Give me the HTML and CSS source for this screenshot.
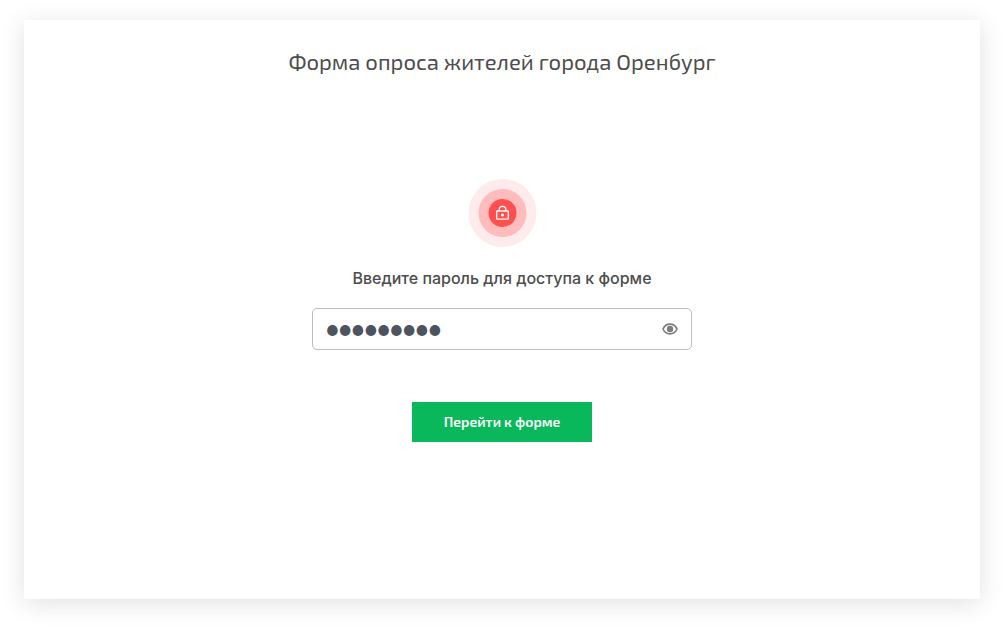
FILE: index.html
```
<!DOCTYPE html>
<html lang="ru">
<head>
    <meta charset="UTF-8">
    <meta name="viewport" content="width=device-width, initial-scale=1.0">
    <title>Форма опроса жителей города Оренбург</title>
    <link rel="stylesheet" href="styles.css">
</head>
<body>

<main class="card">
    <h1 class="title">Форма опроса жителей города Оренбург</h1>

    <form class="access-form">
        <svg class="lock" width="69" height="68" viewBox="-0.5 0 69 68" fill="none" aria-hidden="true">
            <circle cx="34" cy="34" r="34" fill="#ffebeb"/>
            <circle cx="34" cy="34" r="24" fill="#ffbcbc"/>
            <circle cx="34" cy="34" r="14" fill="#ff4f4f"/>
            <rect x="28.2" y="32" width="11.6" height="8.2" rx="0.6" stroke="#fff" stroke-width="1.3"/>
            <path d="M30.7 32v-1.3a3.3 3.3 0 0 1 6.6 0V32" stroke="#fff" stroke-width="1.3"/>
            <circle cx="34" cy="36.1" r="1.5" fill="#fff"/>
        </svg>

        <label class="label" for="password">Введите пароль для доступа к форме</label>

        <div class="field">
            <input class="input" type="text" id="password" value="●●●●●●●●●" autocomplete="off">
            <button class="toggle" type="button" aria-label="Показать пароль">
                <svg width="16" height="12" viewBox="0 0 16 12" fill="none">
                    <path d="M1 6c1.5-3.2 4-4.8 7-4.8s5.5 1.6 7 4.8c-1.5 3.2-4 4.8-7 4.8S2.5 9.2 1 6z" stroke="#7d7d7d" stroke-width="1.7"/>
                    <circle cx="8" cy="6" r="3.2" fill="#7d7d7d"/>
                </svg>
            </button>
        </div>

        <button class="submit" type="submit">Перейти к форме</button>
    </form>
</main>

</body>
</html>
```

FILE: styles.css
```
* {
    box-sizing: border-box;
}

body {
    margin: 0;
    min-height: 100vh;
    padding: 20px 24px 28px;
    display: flex;
    background-color: #fff;
    color: #4d4d4d;
    font-family: Inter, "Liberation Sans", sans-serif;
}

.card {
    flex: 1;
    padding: 27px 24px;
    background-color: #fff;
    box-shadow: 0 4px 24px rgba(0, 0, 0, 0.12);
}

.title {
    margin: 0;
    font-family: "Exo 2", "Noto Sans", sans-serif;
    font-size: 22px;
    font-weight: 400;
    line-height: 28px;
    text-align: center;
}

.access-form {
    max-width: 380px;
    margin: 104px auto 0;
    display: flex;
    flex-direction: column;
    align-items: center;
}

.lock {
    display: block;
}

.label {
    margin-top: 19px;
    font-size: 16px;
    font-weight: 500;
    line-height: 24px;
}

.field {
    width: 100%;
    height: 42px;
    margin-top: 18px;
    padding: 0 13px;
    display: flex;
    align-items: center;
    border: 1px solid #bdbdbd;
    border-radius: 5px;
}

.input {
    flex: 1;
    min-width: 0;
    padding: 2px 0 0;
    border: none;
    outline: none;
    background: none;
    color: #4e5360;
    font-family: Inter, "Liberation Sans", sans-serif;
    font-size: 14px;
}

.toggle {
    padding: 0;
    border: none;
    background: none;
    cursor: pointer;
}

.toggle svg {
    display: block;
}

.submit {
    width: 180px;
    height: 40px;
    margin-top: 52px;
    padding: 0 0 2px;
    border: none;
    background-color: #09b85a;
    color: #fff;
    font-family: "Exo 2", "Noto Sans", sans-serif;
    font-size: 14px;
    font-weight: 600;
    cursor: pointer;
}
```
